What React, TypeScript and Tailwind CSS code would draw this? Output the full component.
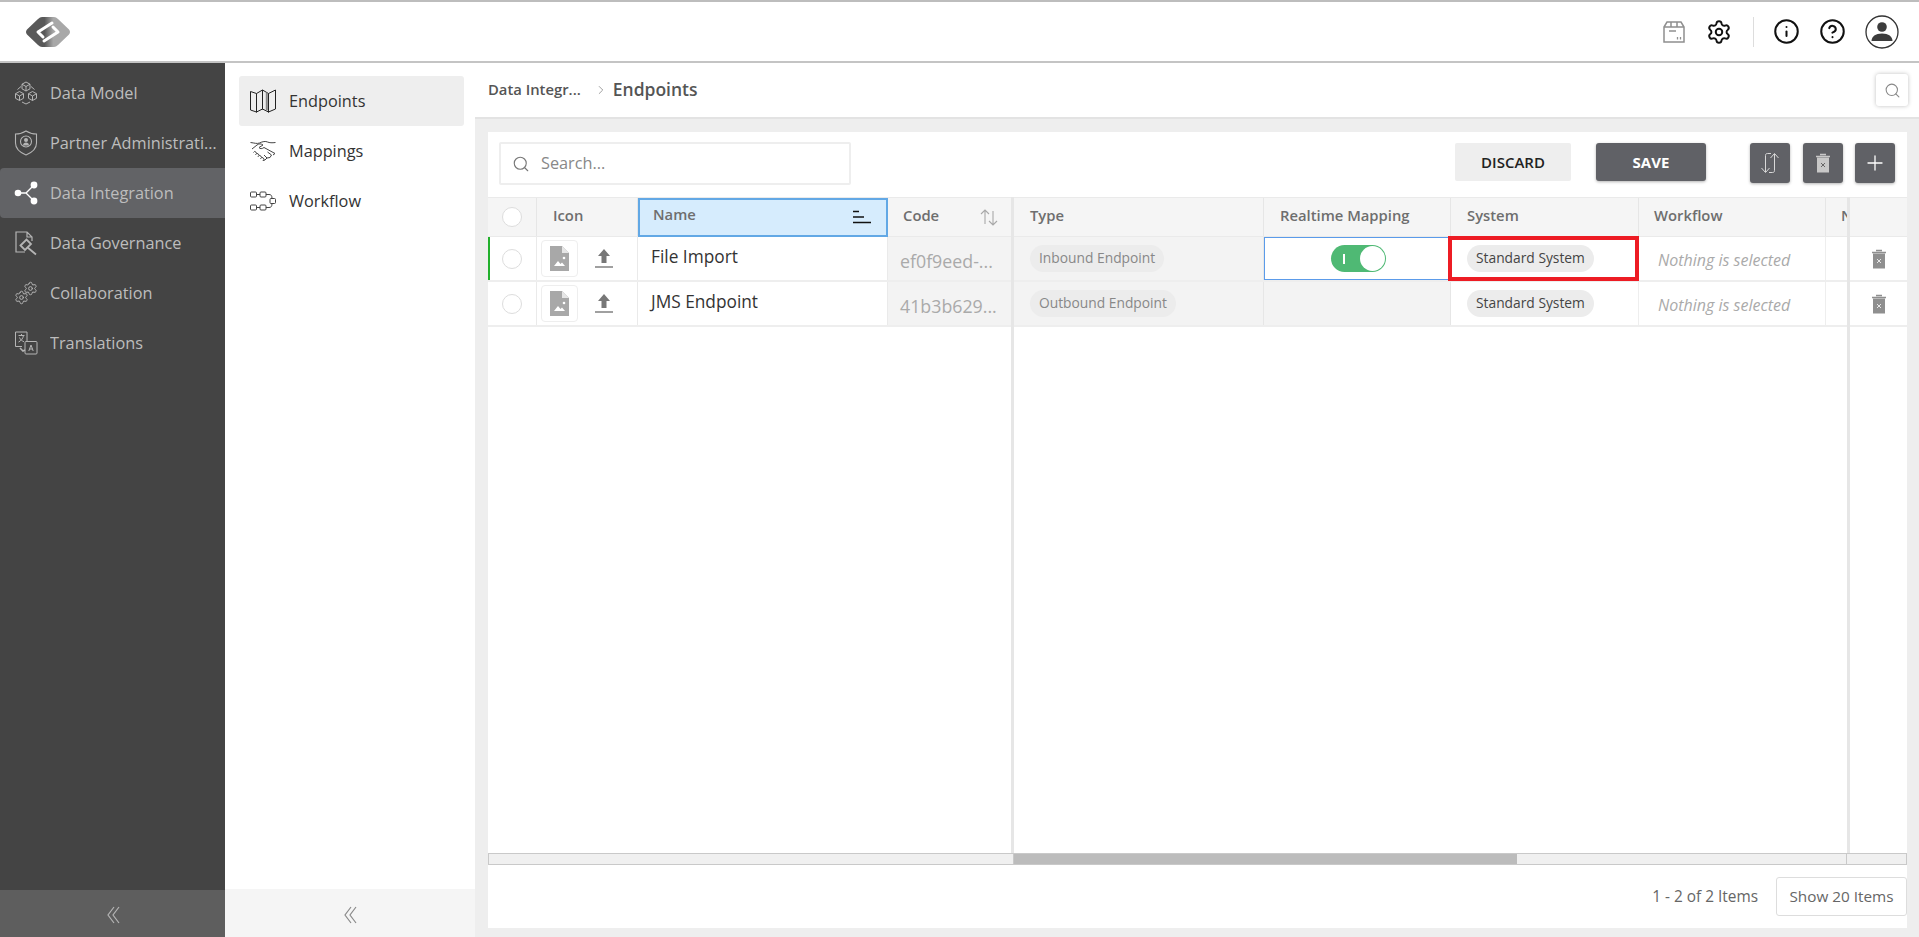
import React from 'react';
import { Settings, Info, CircleHelp, Search, Plus, ChevronRight } from 'lucide-react';

const Logo = () => (
  <svg width="46" height="32" viewBox="0 0 46 32" fill="none">
    <defs>
      <linearGradient id="logoFill" x1="0" y1="0" x2="1" y2="0">
        <stop offset="0.42" stopColor="#595959" />
        <stop offset="0.62" stopColor="#a8a8a8" />
      </linearGradient>
    </defs>
    <path d="M17 1h12q2 0 4 2l11 10.500q2 2.500 0 5L33 29q-2 2-4 2H17q-2 0-4-2L2 18.500q-2-2.500 0-5L13 3q2-2 4-2z" fill="url(#logoFill)" />
    <path d="M27 7L13 16l5 5M19 25l14-9-5-5" stroke="#fff" strokeWidth="3" strokeLinejoin="round" strokeLinecap="round" />
  </svg>
);

const ModelIcon = () => (
  <svg width="24" height="24" viewBox="0 0 24 24" fill="none" stroke="#b5b5b5" strokeWidth="1">
    <path d="M12 1l4 2.200v4.600L12 10 8 7.800V3.200zM8 3.200l4 2.300 4-2.300M12 5.500V10" />
    <path d="M5.500 10.500l4 2.200v4.600l-4 2.200-4-2.200v-4.600zM1.500 12.700l4 2.300 4-2.300M5.500 15v4.500" />
    <path d="M18.500 10.500l4 2.200v4.600l-4 2.200-4-2.200v-4.600zM14.500 12.700l4 2.300 4-2.300M18.500 15v4.500" />
    <path d="M8 21l4 2 4-2M3.500 8.500L7 5.500M20.500 8.500L17 5.500" />
  </svg>
);

const ShieldIcon = () => (
  <svg width="24" height="26" viewBox="0 0 24 26" fill="none" stroke="#b5b5b5" strokeWidth="1.100">
    <path d="M12 1c3 2 6.500 3 10.500 3v9c0 5.500-4.500 9.500-10.500 12C6 22.500 1.500 18.500 1.500 13V4C5.500 4 9 3 12 1z" />
    <circle cx="12" cy="11.500" r="5.500" />
    <circle cx="12" cy="10" r="2" fill="#b5b5b5" stroke="none" />
    <path d="M9 15.500c0-2 1.300-3 3-3s3 1 3 3z" fill="#b5b5b5" stroke="none" />
  </svg>
);

const ShareIcon = () => (
  <svg width="24" height="24" viewBox="0 0 24 24" fill="#fff" stroke="none">
    <circle cx="4" cy="12" r="3.300" />
    <circle cx="20" cy="4" r="3.400" />
    <circle cx="20" cy="20" r="3.400" />
    <path d="M4 12h8l8-8M12 12l8 8" fill="none" stroke="#fff" strokeWidth="1.300" />
  </svg>
);

const GavelDocIcon = () => (
  <svg width="24" height="26" viewBox="0 0 24 26" fill="none" stroke="#b5b5b5" strokeWidth="1.200">
    <path d="M11 22H2V2h11l5 5v4M13 2v5h5" />
    <path d="M6.500 15.500l6-6 4.500 4.500-6 6zM13 17l9 7.500" strokeWidth="1.800" />
  </svg>
);

const GearsIcon = () => (
  <div className="relative h-[24px] w-[24px]">
    <Settings className="absolute bottom-0 left-0 h-[15px] w-[15px] text-[#b5b5b5]" strokeWidth={1.600} />
    <Settings className="absolute right-0 top-0 h-[15px] w-[15px] text-[#b5b5b5]" strokeWidth={1.600} />
  </div>
);

const TranslateIcon = () => (
  <svg width="24" height="24" viewBox="0 0 24 24" fill="none" stroke="#b5b5b5" strokeWidth="1">
    <path d="M8 15.500H1.500V1h11.500v9" />
    <path d="M4.500 4.500h6M7.500 3v1.500M9.500 4.500c-.5 3-2.500 5.500-5 6.500M5.500 6.500c.8 2 2.500 3.500 4.500 4.200" />
    <rect x="11" y="10.500" width="12" height="12.500" rx="1" />
    <path d="M14.800 20l2.200-6 2.200 6M15.600 18h2.800" />
    <path d="M6 17l3 3 2-1" strokeWidth="1.600" />
  </svg>
);

const MapIcon = () => (
  <svg width="26" height="24" viewBox="0 0 26 24" fill="none" stroke="#222" strokeWidth="1">
    <path d="M.5 2.500l6 2 6-3.500 6 3.500 7-3.500v19l-7 3-6-3-6 3-6-2z" />
    <path d="M6.500 4.500v19M12.500 1v19.500M18.500 4.500v19" />
    <path d="M16.800 3.500v18" stroke="#888" strokeWidth="2" />
  </svg>
);

const HandshakeIcon = () => (
  <svg width="26" height="24" viewBox="0 0 26 24" fill="none" stroke="#444" strokeWidth="1">
    <path d="M.5 3.500c4 .5 6.500 1.500 9 .5 3-1.500 6-2 8-1 2 .8 4.500 1 8 .5" />
    <path d="M2 10l5-4c2-1.500 4-1.500 6 0l-4 2.500c1 1.500 3 1.500 5 0l11 6-2 1.500" />
    <path d="M3.500 13.500a1.500 1.500 0 1 1 2 2M6 15.500a1.500 1.500 0 1 1 2 2M8.500 17.500a1.500 1.500 0 1 1 2 2M11 19.500a1.500 1.500 0 1 1 2 2l2-.5 2-2-3-3M17 19l3-.5 1.500-2.500-4-3" />
  </svg>
);

const WorkflowIcon = () => (
  <svg width="26" height="22" viewBox="0 0 26 22" fill="none" stroke="#444" strokeWidth="1">
    <rect x=".5" y="2" width="6" height="5" rx="1" />
    <rect x="10" y="2" width="6" height="5" rx="1" />
    <rect x=".5" y="15" width="6" height="5" rx="1" />
    <rect x="10" y="15" width="6" height="5" rx="1" />
    <rect x="20" y="8.500" width="5.500" height="5" rx="1" />
    <path d="M6.500 4.500H10M6.500 17.500H10M16 4.500h3c2 0 3 1 3 4M16 17.500h3c2 0 3-1 3-4" />
  </svg>
);

const BoxIcon = () => (
  <svg width="22" height="24" viewBox="0 0 22 24" fill="none" stroke="#8f8f8f" strokeWidth="1.500">
    <path d="M1 7l3-5h14l3 5v15H1zM1 7h20M8 2v5M14 2v5" />
    <path d="M6 11h7" />
    <path d="M14.500 17v2.500M17.500 17v2.500" strokeWidth="1.300" />
  </svg>
);

const UserIcon = () => (
  <svg width="34" height="34" viewBox="0 0 34 34" fill="none">
    <circle cx="17" cy="17" r="16" stroke="#333" strokeWidth="1.300" />
    <circle cx="17" cy="12" r="4.800" fill="#3c3c3c" />
    <path d="M6.500 26c0-4.500 4-7.500 10.500-7.500s10.500 3 10.500 7.500z" fill="#3c3c3c" />
  </svg>
);

const TrashIcon = ({ fill, x }: { fill: string; x: string }) => (
  <svg width="14" height="20" viewBox="0 0 14 20" fill="none">
    <path d="M4 1.500h6M0 3.500h14" stroke={fill} strokeWidth="1.500" />
    <rect x="1" y="4.500" width="12" height="15" fill={fill} />
    <path d="M5 10l4 4M9 10l-4 4" stroke={x} strokeWidth="1" />
  </svg>
);

const SwapIcon = () => (
  <svg width="20" height="22" viewBox="0 0 20 22" fill="none" stroke="#d8d8d8" strokeWidth="1">
    <path d="M11 1.500H7.500c-1.500 0-2 .8-2 2V20M1.500 16l4 4.500 4-4.500" />
    <path d="M9 20.500h3.500c1.500 0 2-.8 2-2V2M18.500 6l-4-4.500-4 4.500" />
  </svg>
);

const FileImageIcon = () => (
  <svg width="19" height="25" viewBox="0 0 19 25" fill="none">
    <path d="M0 0h12l7 7v18H0z" fill="#a8a8a8" />
    <path d="M12 0l7 7h-7z" fill="#e6e6e6" />
    <path d="M4 20l4-5 2.500 3 1.500-1.500 3 3.500z" fill="#fff" />
    <circle cx="14" cy="12" r="1.300" fill="#fff" />
  </svg>
);

const UploadIcon = () => (
  <svg width="20" height="19" viewBox="0 0 20 19" fill="none">
    <path d="M10 0l6 7h-3.500v7h-5V7H4z" fill="#777" />
    <path d="M1 18h18" stroke="#888" strokeWidth="1.600" />
  </svg>
);

const SortedIcon = () => (
  <svg width="20" height="14" viewBox="0 0 20 14" fill="none" stroke="#111" strokeWidth="1.700">
    <path d="M1 1.500h6M1 7h11M1 12.500h18" />
  </svg>
);

const SortIcon = () => (
  <svg width="18" height="17" viewBox="0 0 18 17" fill="none" stroke="#a8a8a8" strokeWidth="1.100">
    <path d="M5 15V1M1 5l4-4 4 4" />
    <path d="M13 2v14M9 12l4 4 4-4" />
  </svg>
);

const DoubleChevron = ({ color }: { color: string }) => (
  <svg width="14" height="18" viewBox="0 0 14 18" fill="none" stroke={color} strokeWidth="1.200">
    <path d="M8 1L2 9l6 8M13 1L7 9l6 8" />
  </svg>
);

const mainNav = [
  { label: 'Data Model', icon: <ModelIcon /> },
  { label: 'Partner Administration', icon: <ShieldIcon /> },
  { label: 'Data Integration', icon: <ShareIcon />, active: true },
  { label: 'Data Governance', icon: <GavelDocIcon /> },
  { label: 'Collaboration', icon: <GearsIcon /> },
  { label: 'Translations', icon: <TranslateIcon /> },
];

const subNav = [
  { label: 'Endpoints', icon: <MapIcon />, active: true },
  { label: 'Mappings', icon: <HandshakeIcon /> },
  { label: 'Workflow', icon: <WorkflowIcon /> },
];

const rows = [
  { name: 'File Import', code: 'ef0f9eed-...', type: 'Inbound Endpoint', marked: true },
  { name: 'JMS Endpoint', code: '41b3b629...', type: 'Outbound Endpoint', marked: false },
];

const Radio = () => <div className="h-[20px] w-[20px] rounded-full border border-[#ddd] bg-white"></div>;

const Chip = ({ children, dark }: { children: React.ReactNode; dark?: boolean }) => (
  <span className={`inline-flex h-[27px] items-center whitespace-nowrap rounded-full bg-[#ececec] px-[9px] text-[13.800px] ${dark ? 'text-[#444]' : 'text-[#888]'}`}>
    {children}
  </span>
);

const HeaderText = ({ children }: { children: React.ReactNode }) => (
  <span className="mb-[4px] whitespace-nowrap text-[14.800px] font-semibold text-[#6e6e6e]">{children}</span>
);

export default function App() {
  return (
    <div className="flex h-[937px] w-[1919px] flex-col overflow-hidden bg-white font-['Open_Sans',sans-serif]">
      {/* top bar */}
      <header className="flex h-[63px] shrink-0 items-center justify-between border-t-2 border-b-2 border-t-[#bdbdbd] border-b-[#c4c4c4] bg-white pl-[25px] pr-[20px]">
        <Logo />
        <div className="flex items-center">
          <BoxIcon />
          <Settings className="ml-[21px] h-[26px] w-[26px] text-[#111]" strokeWidth={1.800} />
          <div className="ml-[21px] h-[30px] w-px bg-[#ddd]"></div>
          <Info className="ml-[19px] h-[27px] w-[27px] text-[#111]" strokeWidth={1.800} />
          <CircleHelp className="ml-[19px] h-[27px] w-[27px] text-[#111]" strokeWidth={1.800} />
          <div className="ml-[19px]"><UserIcon /></div>
        </div>
      </header>

      <div className="flex min-h-0 flex-1">
        {/* main nav */}
        <aside className="flex w-[225px] shrink-0 flex-col bg-[#444444]">
          <nav className="flex-1 pt-[5px]">
            {mainNav.map((item) => (
              <div
                key={item.label}
                className={`flex h-[50px] items-center pl-[14px] pr-[8px] ${item.active ? 'rounded-l-[4px] bg-[#626366]' : ''}`}
              >
                <div className="flex w-[36px] shrink-0">{item.icon}</div>
                <span className="truncate text-[16.300px] text-[#bdbdbd]">{item.label}</span>
              </div>
            ))}
          </nav>
          <div className="flex h-[47px] items-center justify-center bg-[#5e5e5e] pt-[3px]">
            <DoubleChevron color="#b5b5b5" />
          </div>
        </aside>

        {/* sub nav */}
        <aside className="flex w-[250px] shrink-0 flex-col bg-white">
          <nav className="flex-1 pl-[14px] pr-[11px] pt-[13px]">
            {subNav.map((item) => (
              <div
                key={item.label}
                className={`flex h-[50px] items-center rounded-[3px] pl-[11px] ${item.active ? 'bg-[#eeeeee]' : ''}`}
              >
                <div className="flex w-[39px] shrink-0">{item.icon}</div>
                <span className="text-[16.300px] text-[#333]">{item.label}</span>
              </div>
            ))}
          </nav>
          <div className="flex h-[48px] items-center justify-center bg-[#f5f5f5] pt-[3px]">
            <DoubleChevron color="#8a8a8a" />
          </div>
        </aside>

        {/* content */}
        <main className="flex min-w-0 flex-1 flex-col bg-[#eeeeee]">
          <div className="flex h-[56px] shrink-0 items-center border-b-2 border-b-[#e3e3e3] bg-white pl-[13px] pr-[11px]">
            <span className="mb-px text-[14.800px] font-semibold text-[#555]">Data Integr...</span>
            <ChevronRight className="ml-[13px] h-[14px] w-[14px] text-[#777]" strokeWidth={1.200} />
            <span className="mb-px ml-[5px] text-[17.500px] font-semibold text-[#555]">Endpoints</span>
            <div className="ml-auto flex h-[32px] w-[32px] items-center justify-center rounded-[3px] bg-white shadow-[0_0_4px_rgba(0,0,0,0.25)]">
              <Search className="h-[17px] w-[17px] text-[#888]" strokeWidth={1.500} />
            </div>
          </div>

          <div className="mx-[13px] mb-[9px] mt-[13px] flex min-h-0 w-[1419px] flex-1 flex-col bg-white">
            {/* toolbar */}
            <div className="flex h-[65px] shrink-0 items-start pl-[11px] pr-[12px] pt-[10px]">
              <div className="flex h-[43px] w-[352px] items-center rounded-[2px] border-2 border-[#eeeeee] pl-[11px]">
                <Search className="h-[18px] w-[18px] text-[#777]" strokeWidth={1.500} />
                <span className="ml-[11px] text-[16.300px] text-[#888]">Search...</span>
              </div>
              <button className="ml-auto mt-px h-[38px] w-[116px] rounded-[2px] bg-[#eeeeee] pt-px text-[15px] font-semibold text-[#222]">DISCARD</button>
              <button className="ml-[25px] mt-px h-[38px] w-[110px] rounded-[3px] bg-[#606166] text-[15px] font-bold text-white shadow-[0_1px_3px_rgba(0,0,0,0.3)]">SAVE</button>
              <button className="ml-[44px] mt-px flex h-[40px] w-[40px] items-center justify-center rounded-[3px] bg-[#606166] shadow-[0_1px_3px_rgba(0,0,0,0.3)]"><SwapIcon /></button>
              <button className="ml-[13px] mt-px flex h-[40px] w-[40px] items-center justify-center rounded-[3px] bg-[#606166] shadow-[0_1px_3px_rgba(0,0,0,0.3)]"><TrashIcon fill="#c8c8c8" x="#666" /></button>
              <button className="ml-[12px] mt-px flex h-[40px] w-[40px] items-center justify-center rounded-[3px] bg-[#606166] shadow-[0_1px_3px_rgba(0,0,0,0.3)]"><Plus className="h-[24px] w-[24px] text-white" strokeWidth={1.300} /></button>
            </div>

            {/* table */}
            <div className="flex min-h-0 flex-1 flex-col">
              <div className="flex min-h-0 flex-1">
                {/* frozen columns */}
                <div className="w-[526px] shrink-0 border-r-[3px] border-r-[#e6e6e6]">
                  <div className="flex h-[40px] border-y border-y-[#eaeaea] bg-[#f5f5f5]">
                    <div className="flex w-[49px] items-center justify-center border-r border-r-[#e6e6e6]"><Radio /></div>
                    <div className="flex w-[101px] items-center border-r border-r-[#e6e6e6] pl-[16px]"><HeaderText>Icon</HeaderText></div>
                    <div className="flex h-[39px] w-[250px] items-center justify-between border-[2px] border-[#62a8e5] bg-[#d6ecfd] pl-[13px] pr-[14px] pb-[2px]">
                      <HeaderText>Name</HeaderText>
                      <SortedIcon />
                    </div>
                    <div className="flex w-[123px] items-center justify-between pl-[15px] pr-[13px]">
                      <HeaderText>Code</HeaderText>
                      <SortIcon />
                    </div>
                  </div>
                  {rows.map((row) => (
                    <div key={row.name} className="relative flex h-[45px] border-b-2 border-b-[#eeeeee]">
                      {row.marked && <div className="absolute bottom-0 left-0 top-0 w-[2px] bg-[#22b02c]"></div>}
                      <div className="flex w-[49px] items-center justify-center border-r border-r-[#eaeaea]"><Radio /></div>
                      <div className="flex w-[101px] items-center border-r border-r-[#eaeaea] pl-[4px]">
                        <div className="flex h-[37px] w-[37px] items-center justify-center rounded-[4px] border border-[#eeeeee]"><FileImageIcon /></div>
                        <div className="ml-[16px]"><UploadIcon /></div>
                      </div>
                      <div className="flex w-[250px] items-start border-r border-r-[#eaeaea] pl-[13px] pt-[7px] text-[17.300px] text-[#333]">{row.name}</div>
                      <div className="flex w-[123px] items-center whitespace-nowrap bg-[#f3f3f3] pl-[12px] pt-[5px] text-[17.800px] text-[#aaa]">{row.code}</div>
                    </div>
                  ))}
                </div>

                {/* scrolling columns */}
                <div className="flex min-w-0 flex-1 flex-col overflow-hidden">
                  <div className="flex h-[40px] shrink-0 border-y border-y-[#eaeaea] bg-[#f5f5f5]">
                    <div className="flex w-[250px] items-center border-r border-r-[#e6e6e6] pl-[16px]"><HeaderText>Type</HeaderText></div>
                    <div className="flex w-[187px] items-center border-r border-r-[#e6e6e6] pl-[16px]"><HeaderText>Realtime Mapping</HeaderText></div>
                    <div className="flex w-[188px] items-center border-r border-r-[#e6e6e6] pl-[16px]"><HeaderText>System</HeaderText></div>
                    <div className="flex w-[187px] items-center border-r border-r-[#e6e6e6] pl-[15px]"><HeaderText>Workflow</HeaderText></div>
                    <div className="flex min-w-0 flex-1 items-center overflow-hidden pl-[15px]"><HeaderText>N</HeaderText></div>
                  </div>
                  {rows.map((row) => (
                    <div key={row.name} className="flex h-[45px] shrink-0 border-b-2 border-b-[#eeeeee]">
                      <div className="flex w-[250px] items-center border-r border-r-[#e6e6e6] bg-[#f3f3f3] pl-[16px]"><Chip>{row.type}</Chip></div>
                      {row.marked ? (
                        <div className="flex w-[187px] items-center justify-center border border-[#5b9bea] bg-white pl-[2px]">
                          <div className="flex h-[27px] w-[55px] items-center justify-between rounded-full bg-[#4fb974] pl-[12px] pr-[1px]">
                            <span className="h-[10px] w-[2px] bg-white"></span>
                            <span className="h-[25px] w-[25px] rounded-full bg-white"></span>
                          </div>
                        </div>
                      ) : (
                        <div className="w-[187px] border-r border-r-[#e6e6e6] bg-[#f3f3f3]"></div>
                      )}
                      <div className="relative flex w-[188px] items-center border-r border-r-[#eeeeee] pl-[16px]">
                        <Chip dark>Standard System</Chip>
                        {row.marked && <div className="absolute -left-[3px] -right-px -top-px bottom-[-1px] border-[4px] border-[#ed1c24]"></div>}
                      </div>
                      <div className="flex w-[187px] items-center whitespace-nowrap border-r border-r-[#eeeeee] pl-[19px] pt-[2px] text-[16px] italic text-[#aaa]">Nothing is selected</div>
                    </div>
                  ))}
                </div>

                {/* row actions */}
                <div className="w-[60px] shrink-0 border-l-[3px] border-l-[#e6e6e6]">
                  <div className="h-[40px] border-y border-y-[#eaeaea] bg-[#f5f5f5]"></div>
                  {rows.map((row) => (
                    <div key={row.name} className="flex h-[45px] items-center justify-center border-b-2 border-b-[#eeeeee]">
                      <TrashIcon fill="#8f8f8f" x="#e8e8e8" />
                    </div>
                  ))}
                </div>
              </div>

              {/* horizontal scrollbar */}
              <div className="flex h-[12px] shrink-0 border-y border-y-[#c9c9c9] bg-[#f0f0f0]">
                <div className="w-[526px] shrink-0 border-x border-x-[#c9c9c9]"></div>
                <div className="h-full w-[503px] bg-[#bcbcbc]"></div>
                <div className="flex-1 border-r border-r-[#c9c9c9]"></div>
                <div className="w-[60px] border-r border-r-[#c9c9c9]"></div>
              </div>
            </div>

            {/* footer */}
            <div className="flex h-[63px] shrink-0 items-center justify-end">
              <span className="text-[15.400px] text-[#666]">1 - 2 of 2 Items</span>
              <div className="ml-[18px] flex h-[39px] w-[131px] items-center justify-center rounded-[3px] border border-[#dddddd] text-[15.300px] text-[#666]">Show 20 Items</div>
            </div>
          </div>
        </main>
      </div>
    </div>
  );
}
